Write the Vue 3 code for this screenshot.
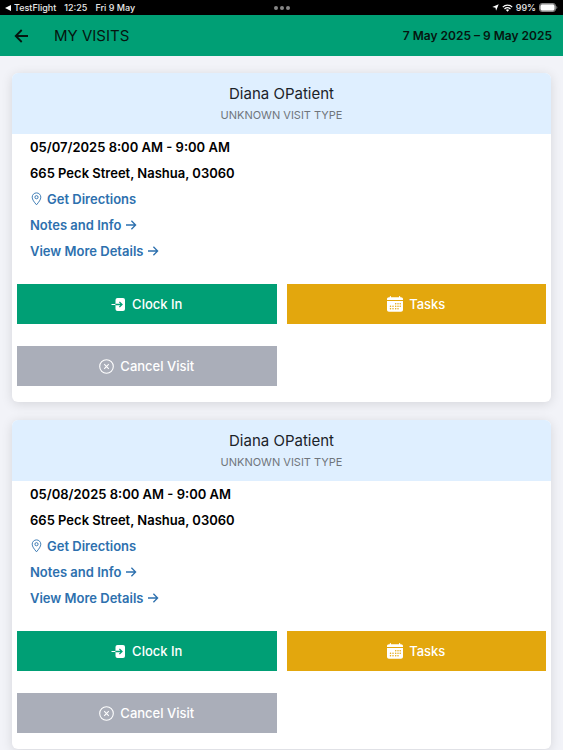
<template>
  <div class="page">
    <div class="status-bar">
      <div class="status-left">
        <span class="back-app">
          <svg class="back-mark" viewBox="0 0 6 6"><path d="M6 0v6L0 3z" /></svg>
          TestFlight
        </span>
        <span>12:25</span>
        <span>Fri 9 May</span>
      </div>
      <div class="status-dots"><i></i><i></i><i></i></div>
      <div class="status-right">
        <svg class="location" viewBox="0 0 10 10"><path d="M9.6.4 5.8 9.6 5 5.2.4 4.4z" /></svg>
        <svg class="wifi" viewBox="0 0 14 10">
          <path d="M1 3.9a8.6 8.6 0 0 1 12 0M3.2 6.2a5.4 5.4 0 0 1 7.6 0" />
          <path class="wifi-dot" d="M4.9 7.5a3 3 0 0 1 4.2 0L7 9.7z" />
        </svg>
        <span>99%</span>
        <svg class="battery" viewBox="0 0 19 9">
          <rect class="battery-shell" x=".5" y=".5" width="16" height="8" rx="2.4" />
          <rect x="1.3" y="1.3" width="14.4" height="6.4" rx="1.6" />
          <path class="battery-tip" d="M17.4 3c1.2.3 1.2 2.7 0 3z" />
        </svg>
      </div>
    </div>

    <header class="toolbar">
      <button class="back" type="button" aria-label="Back">
        <svg viewBox="0 0 16 16"><path d="M15 8H3M8.700 2 2.700 8l6 6" /></svg>
      </button>
      <h1>MY VISITS</h1>
      <span class="range">7 May 2025 – 9 May 2025</span>
    </header>

    <main class="visits">
      <article v-for="visit in visits" :key="visit.id" class="card">
        <div class="card-head">
          <h2>{{ visit.patient }}</h2>
          <p>{{ visit.type }}</p>
        </div>

        <div class="details">
          <p>{{ visit.time }}</p>
          <p>{{ visit.address }}</p>
          <a href="#" @click.prevent>
            <svg class="pin" viewBox="0 0 12 14">
              <path d="M6 12.8C3.6 10 1.7 7.5 1.7 5.2a4.3 4.3 0 0 1 8.6 0C10.3 7.5 8.4 10 6 12.8z" />
              <circle cx="6" cy="5.2" r="1.6" />
            </svg>
            Get Directions
          </a>
          <a v-for="link in links" :key="link" href="#" @click.prevent>
            {{ link }}
            <svg class="arrow" viewBox="0 0 12 12"><path d="M1 6h9.6M6.4 1.8 10.6 6l-4.200 4.200" /></svg>
          </a>
        </div>

        <div class="actions">
          <button class="clock-in" type="button">
            <svg class="enter" viewBox="0 0 15 15">
              <rect class="solid" x="4.5" y="1" width="9.5" height="13" rx="2" />
              <path class="line" d="M.5 7.5h4" />
              <path class="cut" d="M4.5 7.5h6.3M8.4 4.9l2.6 2.6-2.6 2.6" />
            </svg>
            Clock In
          </button>
          <button class="tasks" type="button">
            <svg class="calendar" viewBox="0 0 16 16">
              <path class="solid" d="M0 4V3.2C0 2 .8 1.3 2 1.3h.8V.6a.6.6 0 0 1 1.2 0v.7h8V.6a.6.6 0 0 1 1.2 0v.7h.8c1.2 0 2 .7 2 1.9V4zM0 5h16v8.800c0 1.200-.8 2-2 2H2c-1.200 0-2-.8-2-2z" />
              <path class="dots" d="M8.700 7.700h.01M11 7.700h.01M13.200 7.700h.01M3.500 10.200h.01M6 10.200h.01M8.700 10.200h.01M11 10.200h.01M13.200 10.200h.01M3.500 12.800h.01M6 12.800h.01M8.700 12.800h.01M11 12.800h.01" />
            </svg>
            Tasks
          </button>
          <button class="cancel" type="button">
            <svg class="cross" viewBox="0 0 15 15">
              <circle cx="7.5" cy="7.5" r="6.8" />
              <path d="m5.2 5.2 4.6 4.6M9.8 5.2 5.2 9.8" />
            </svg>
            Cancel Visit
          </button>
        </div>
      </article>
    </main>
  </div>
</template>

<script setup>
const visits = [
  {
    id: 1,
    patient: "Diana OPatient",
    type: "UNKNOWN VISIT TYPE",
    time: "05/07/2025 8:00 AM - 9:00 AM",
    address: "665 Peck Street, Nashua, 03060"
  },
  {
    id: 2,
    patient: "Diana OPatient",
    type: "UNKNOWN VISIT TYPE",
    time: "05/08/2025 8:00 AM - 9:00 AM",
    address: "665 Peck Street, Nashua, 03060"
  }
];

const links = ["Notes and Info", "View More Details"];
</script>

<style>
body {
  margin: 0;
  background: #f2f3f8;
}
</style>

<style scoped>
.page {
  min-height: 100vh;
  background: #f2f3f8;
  font-family: Inter, Roboto, "Liberation Sans", sans-serif;
  font-size: 13px;
  color: #000;
}

h1,
h2,
p {
  margin: 0;
}

.status-bar {
  display: grid;
  grid-template-columns: 1fr auto 1fr;
  align-items: center;
  height: 15px;
  padding: 0 5px;
  background: #000;
  color: #e8e8e8;
  font-size: 9px;
  font-weight: 500;
  line-height: 15px;
}

.status-bar svg {
  fill: #fff;
}

.status-left,
.status-right {
  display: flex;
  align-items: center;
}

.status-left {
  gap: 8px;
}

.back-app {
  display: flex;
  align-items: center;
  gap: 3px;
}

.back-mark {
  width: 6px;
  height: 6px;
}

.status-dots {
  display: flex;
  gap: 2px;
}

.status-dots i {
  width: 4px;
  height: 4px;
  border-radius: 50%;
  background: #858585;
}

.status-right {
  justify-content: flex-end;
  gap: 3px;
}

.location {
  width: 7px;
  height: 7px;
}

.wifi {
  width: 11px;
  height: 8px;
}

.status-bar .wifi path {
  fill: none;
  stroke: #fff;
  stroke-width: 1.6;
}

.status-bar .wifi .wifi-dot {
  fill: #fff;
  stroke: none;
}

.battery {
  width: 19px;
  height: 9px;
}

.status-bar .battery-shell {
  fill: none;
  stroke: #8a8a8a;
}

.status-bar .battery-tip {
  fill: #8a8a8a;
}

.toolbar {
  display: flex;
  align-items: center;
  height: 41px;
  padding: 0 11px 0 13px;
  background: #009f75;
  color: #06150f;
}

.back {
  display: flex;
  margin-right: 25px;
  padding: 0;
  border: 0;
  background: none;
  cursor: pointer;
}

.back svg {
  width: 16px;
  height: 16px;
  fill: none;
  stroke: #06150f;
  stroke-width: 1.8;
}

.toolbar h1 {
  font-size: 15px;
  font-weight: 400;
}

.range {
  margin-left: auto;
  font-size: 12px;
  font-weight: 600;
}

.visits {
  display: flex;
  flex-direction: column;
  gap: 18px;
  padding: 17px 12px 0;
}

.card {
  overflow: hidden;
  border-radius: 6px;
  background: #fff;
  box-shadow: 0 2px 12px rgba(0, 0, 0, 0.12);
}

.card-head {
  padding: 10px 0 8px;
  background: #dfefff;
  text-align: center;
}

.card-head h2 {
  color: #1b2229;
  font-size: 15px;
  font-weight: 400;
  line-height: 22px;
}

.card-head p {
  color: #70757b;
  font-size: 11px;
  line-height: 21px;
}

.details {
  padding: 0 18px;
  font-weight: 600;
  line-height: 26px;
}

.details a {
  display: flex;
  align-items: center;
  gap: 4px;
  width: fit-content;
  color: #2d70ae;
  text-decoration: none;
}

.details svg {
  fill: none;
  stroke: #2d70ae;
  stroke-width: 1.3;
}

.pin {
  width: 13px;
  height: 14px;
}

.details .pin {
  stroke-width: 0.9;
}

.arrow {
  width: 12px;
  height: 12px;
}

.actions {
  display: grid;
  grid-template-columns: 1fr 1fr;
  gap: 22px 10px;
  padding: 20px 5px 16px;
}

.actions button {
  display: flex;
  align-items: center;
  justify-content: center;
  gap: 6px;
  height: 40px;
  padding: 0;
  border: 0;
  color: #fff;
  font-family: inherit;
  font-size: 13px;
  font-weight: 500;
  cursor: pointer;
}

.actions .clock-in {
  background: #009f75;
}

.actions .tasks {
  background: #e3a70d;
}

.actions .cancel {
  background: #aaaeb9;
}

.enter,
.cross {
  width: 15px;
  height: 15px;
}

.calendar {
  width: 16px;
  height: 16px;
}

.solid {
  fill: #fff;
}

.line {
  stroke: #fff;
  stroke-width: 1.2;
}

.cut {
  fill: none;
  stroke: #009f75;
  stroke-width: 1.3;
}

.dots {
  fill: none;
  stroke: #e3a70d;
  stroke-width: 1.5;
  stroke-linecap: round;
}

.cross {
  fill: none;
  stroke: #fff;
  stroke-width: 1.1;
}
</style>
